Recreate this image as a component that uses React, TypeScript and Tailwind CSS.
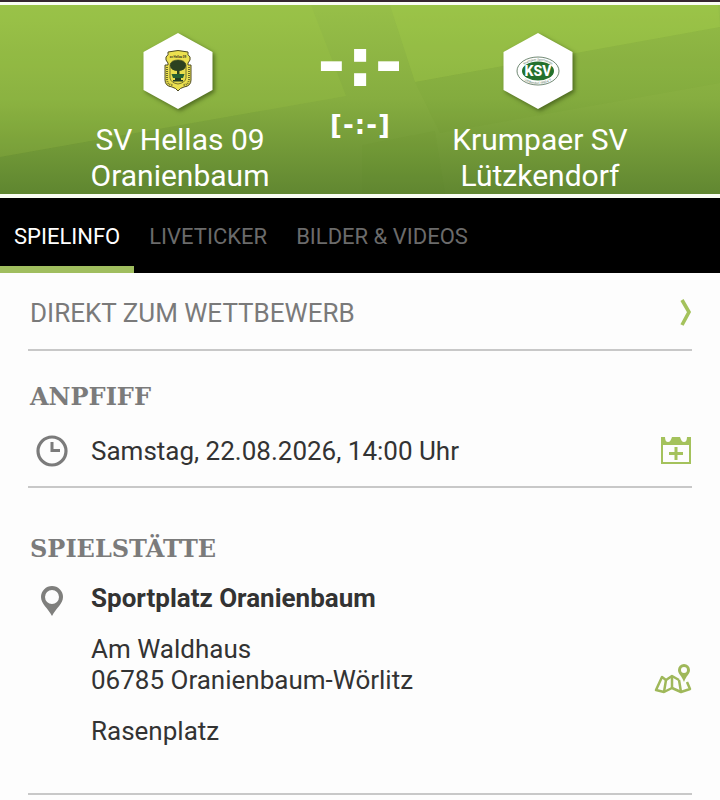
import { useState } from 'react'
import type { ReactNode } from 'react'

type Tab = 'info' | 'ticker' | 'media'

const tabs: { id: Tab; label: string }[] = [
  { id: 'info',   label: 'SPIELINFO'       },
  { id: 'ticker', label: 'LIVETICKER'      },
  { id: 'media',  label: 'BILDER & VIDEOS' },
]

function HeaderBackdrop() {
  return (
    <svg
      className="absolute inset-0 w-full h-full"
      viewBox="0 0 720 189"
      preserveAspectRatio="none"
      aria-hidden="true"
    >
      <path d="M0 0H311L346 91L0 152Z" fill="#b4e04c" fillOpacity="0.12" />
      <path d="M390 0H718L720 22L415 77Z" fill="#b4e04c" fillOpacity="0.16" />
      <path d="M415 77L720 22V78L440 128Z" fill="#4c7424" fillOpacity="0.04" />
      <path d="M0 152L260 106V189H0Z" fill="#4c7424" fillOpacity="0.03" />
      <path d="M362 189V140L435 126L445 189Z" fill="#4c7424" fillOpacity="0.04" />
    </svg>
  )
}

function HellasCrest() {
  return (
    <svg width="28" height="42" viewBox="0 0 28 42" aria-hidden="true">
      <path
        d="M4 2Q14-1 24 2Q23 5 26 7Q27 10 24 13V15H27V30Q27 36 20 37Q16 38 14 41Q12 38 8 37Q1 36 1 30V15H4V13Q1 10 2 7Q5 5 4 2Z"
        fill="#ece04f"
        stroke="#4d4a24"
        strokeWidth="1"
      />
      <path d="M3 17V29Q3 35 9 35M25 17V29Q25 35 19 35" fill="none" stroke="#6d6b2c" strokeWidth="2" strokeDasharray="1 1" />
      <path d="M6 15V28Q7 33 14 34Q21 33 22 28V15Q21 10 14 10Q7 10 6 15Z" fill="#e9dd4c" stroke="#5d5c28" strokeWidth="0.8" />
      <text x="14" y="8" textAnchor="middle" fontFamily="Roboto, sans-serif" fontSize="3" fontWeight="700" fill="#3b3720">
        sv Hellas 09
      </text>
      <ellipse cx="14" cy="15.500" rx="8" ry="5.500" fill="#2c4220" />
      <path d="M13 19H15.500V24H13Z" fill="#2c4220" />
      <path d="M7.500 24H20.500L19 28H9Z" fill="#276032" />
      <path d="M11 28H17V30H19V31.500H9V30H11Z" fill="#233c23" />
    </svg>
  )
}

function KrumpaCrest() {
  return (
    <svg width="44" height="30" viewBox="0 0 44 30" aria-hidden="true">
      <defs>
        <path id="ring-top" d="M5 15A17 10.500 0 0 1 39 15" />
        <path id="ring-bottom" d="M3.500 15A18.500 13 0 0 0 40.500 15" />
      </defs>
      <ellipse cx="22" cy="15" rx="21" ry="14" fill="#fff" stroke="#4c6b50" strokeWidth="0.8" />
      <ellipse cx="22" cy="15" rx="16" ry="9.500" fill="#24712d" />
      <g fontFamily="Roboto, sans-serif" fontSize="3" fill="#4c6b50">
        <text textAnchor="middle">
          <textPath href="#ring-top" startOffset="50%">Krumpaer Sportverein</textPath>
        </text>
        <text textAnchor="middle">
          <textPath href="#ring-bottom" startOffset="50%">Lützkendorf 1990 e.V.</textPath>
        </text>
      </g>
      <text
        x="22"
        y="20"
        textAnchor="middle"
        fontFamily="Roboto, sans-serif"
        fontSize="14"
        fontWeight="800"
        fill="#fff"
      >
        KSV
      </text>
    </svg>
  )
}

function Team({ name, children }: { name: string; children: ReactNode }) {
  return (
    <div className="flex flex-col items-center">
      <div className="relative mr-1 w-[70px] h-19 flex items-center justify-center">
        <svg
          className="absolute inset-0 w-full h-full overflow-visible drop-shadow-[2px_2px_2px_rgba(40,60,10,0.6)]"
          viewBox="0 0 70 76"
          aria-hidden="true"
        >
          <path d="M35 0L69.500 19V57L35 76L0.500 57V19Z" fill="#fff" />
        </svg>
        <div className="relative">{children}</div>
      </div>
      <h2 className="mt-[13px] text-center text-[30px] leading-9 text-white">{name}</h2>
    </div>
  )
}

function ClockIcon() {
  return (
    <svg width="32" height="32" viewBox="0 0 32 32" fill="none" stroke="#7b7b7b" aria-hidden="true">
      <circle cx="16" cy="16" r="14" strokeWidth="3.200" />
      <path d="M16 7V15.500H24" strokeWidth="3" />
    </svg>
  )
}

function PinIcon() {
  return (
    <svg width="24" height="32" viewBox="0 0 24 32" aria-hidden="true">
      <path
        d="M12 1A11 11 0 0 0 1 12C1 19 8 23 12 31C16 23 23 19 23 12A11 11 0 0 0 12 1ZM12 5A7 7 0 1 1 12 19A7 7 0 1 1 12 5Z"
        fill="#7f7f7d"
        fillRule="evenodd"
      />
    </svg>
  )
}

function CalendarIcon() {
  return (
    <svg width="32" height="28" viewBox="0 0 32 28" aria-hidden="true">
      <path
        d="M1 0H5C5 3 6 5 8 5S11 3 12 0H20C21 3 22 5 24 5S27 3 27 0H31V27H1ZM3 8V25H29V8Z"
        fill="#a4c25c"
        fillRule="evenodd"
      />
      <path d="M16 10V23M9 16.500H23" stroke="#a4c25c" strokeWidth="3" />
    </svg>
  )
}

function MapIcon() {
  return (
    <svg width="38" height="32" viewBox="0 0 38 32" aria-hidden="true">
      <g fill="none" stroke="#9fb85a" strokeWidth="2.500" strokeLinejoin="round">
        <path d="M25 17L18 13L12 17L8 14L2 27L10 29L18 25L27 29L36 26L33 19" />
        <path d="M12 17L10 29M18 13V25M25 17L27 29" />
      </g>
      <path
        d="M30 1A6 6 0 0 0 24 7C24 11 28 13 30 19C32 13 36 11 36 7A6 6 0 0 0 30 1ZM30 4A3 3 0 1 1 30 10A3 3 0 1 1 30 4Z"
        fill="#9fb85a"
        fillRule="evenodd"
      />
    </svg>
  )
}

export default function App() {
  const [tab, setTab] = useState<Tab>('info')

  return (
    <div className="min-h-screen bg-[#fdfdfd] font-['Roboto',sans-serif] text-[26px] leading-[31px] text-[#333333]">
      <header className="relative border-t-2 border-[#35262f]">
        <div className="relative border-t-3 border-b-4 border-[#fafdf3] bg-linear-to-b from-[#97bf48] via-[#86ad40] to-[#618731]">
          <HeaderBackdrop />
          <div className="relative grid grid-cols-[1fr_112px_1fr] px-14 pt-7">
            <Team name="SV Hellas 09 Oranienbaum">
              <HellasCrest />
            </Team>
            <div className="flex flex-col items-center text-white font-bold font-['DejaVu_Sans',sans-serif]">
              <div className="flex gap-px text-[68px] leading-15">
                <span>-</span>
                <span>:</span>
                <span>-</span>
              </div>
              <div className="flex gap-px mt-4 text-[26px] leading-8">
                <span>[</span>
                <span>-</span>
                <span>:</span>
                <span>-</span>
                <span>]</span>
              </div>
            </div>
            <Team name="Krumpaer SV Lützkendorf">
              <KrumpaCrest />
            </Team>
          </div>
        </div>
      </header>

      <nav className="flex gap-px bg-black">
        {tabs.map(t => (
          <button
            key={t.id}
            onClick={() => setTab(t.id)}
            className={`h-[75px] px-[14px] pt-[9px] border-b-7 text-[22px] ${
              tab === t.id ? 'border-[#a0be5f] text-white' : 'border-transparent text-[#6b6b6b]'
            }`}
          >
            {t.label}
          </button>
        ))}
      </nav>

      <main className="px-7">
        <a href="#wettbewerb" className="flex h-[78px] items-center justify-between border-b-2 border-[#c8c8c8] pt-1 pl-[2px] text-[#7a7a7a]">
          DIREKT ZUM WETTBEWERB
          <svg width="12" height="28" viewBox="0 0 12 28" fill="none" aria-hidden="true">
            <path d="M2 1L9 13L2 26" stroke="#a4c25c" strokeWidth="3.600" />
          </svg>
        </a>

        <section className="border-b-2 border-[#c8c8c8] pt-[30px] pb-[19px] pl-[2px]">
          <h3 className="font-['DejaVu_Serif',serif] text-2xl leading-8 font-bold text-[#7b7b7b]">ANPFIFF</h3>
          <div className="mt-[22px] flex items-center">
            <div className="w-[61px] pl-[6px]">
              <ClockIcon />
            </div>
            <p className="flex-1">Samstag, 22.08.2026, 14:00 Uhr</p>
            <button aria-label="Zum Kalender hinzufügen">
              <CalendarIcon />
            </button>
          </div>
        </section>

        <section className="border-b-2 border-[#c8c8c8] pt-[45px] pb-[46px] pl-[2px]">
          <h3 className="font-['DejaVu_Serif',serif] text-2xl leading-8 font-bold text-[#7b7b7b]">SPIELSTÄTTE</h3>
          <div className="mt-[18px] flex">
            <div className="w-[61px] pt-[2px] pl-[10px]">
              <PinIcon />
            </div>
            <div className="flex flex-1 flex-col gap-5">
              <p className="font-bold">Sportplatz Oranienbaum</p>
              <address className="not-italic">
                Am Waldhaus
                <br />
                06785 Oranienbaum-Wörlitz
              </address>
              <p>Rasenplatz</p>
            </div>
            <button aria-label="Karte öffnen" className="self-center pt-7">
              <MapIcon />
            </button>
          </div>
        </section>
      </main>
    </div>
  )
}
